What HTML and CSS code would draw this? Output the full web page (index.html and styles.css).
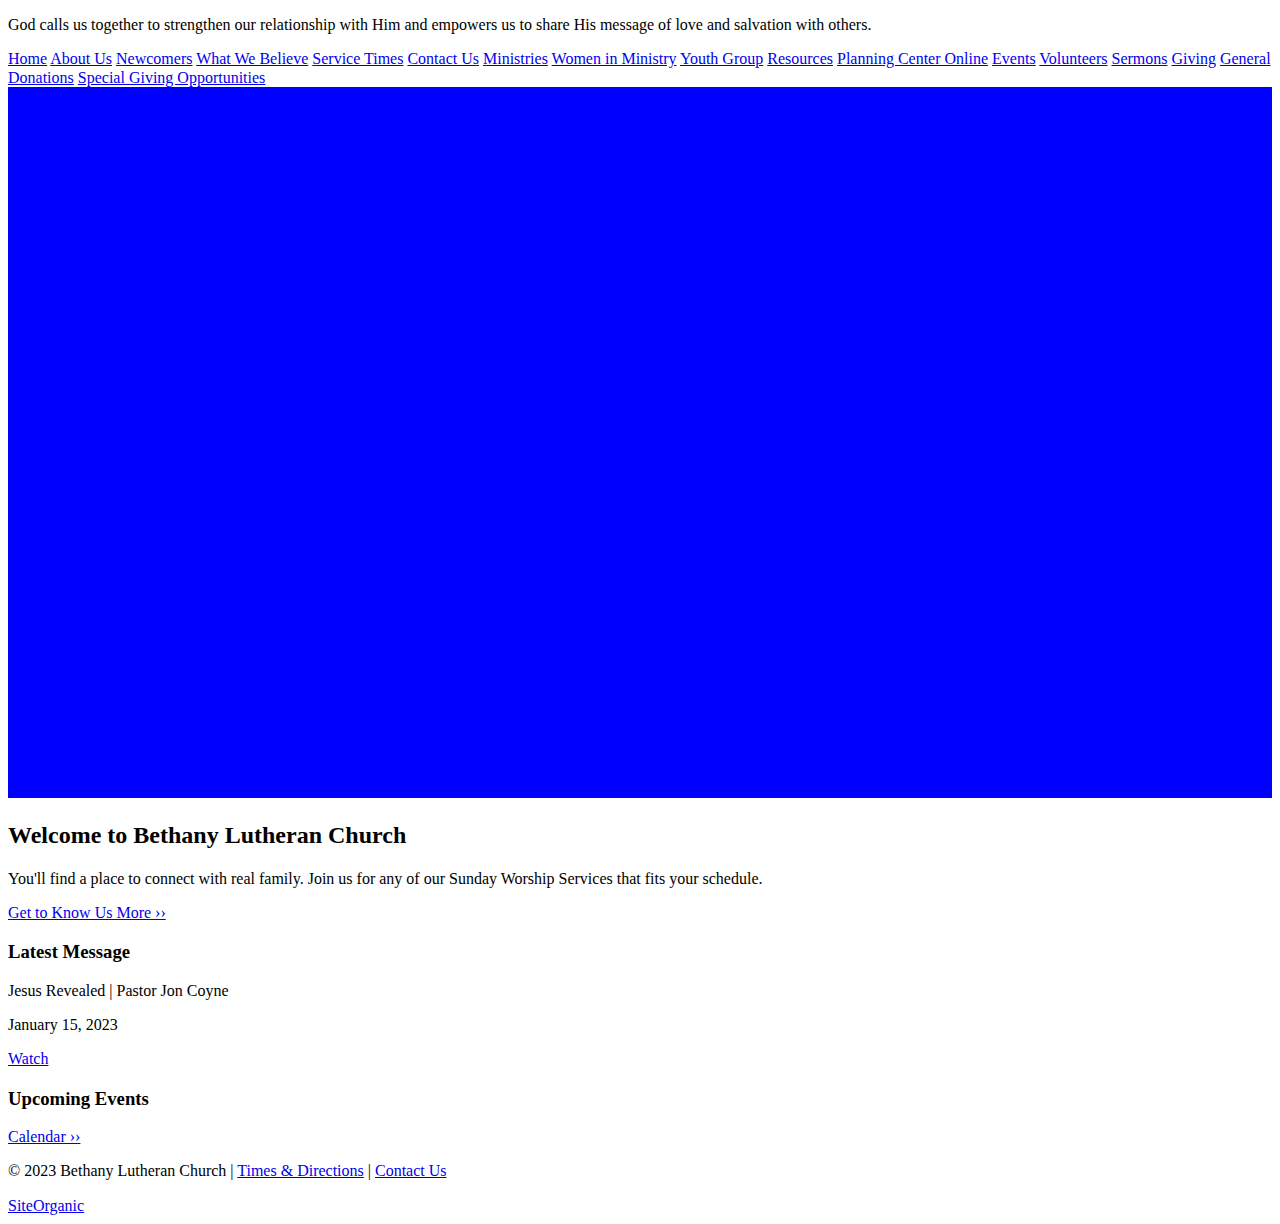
FILE: index.html
```html
<!DOCTYPE html>
<html lang="en">
<head>
<meta charset="utf-8">
<title>Bethany Lutheran Church</title>
<link rel="stylesheet" href="styles.css">
</head>
<body class="page">
<p class="tagline">God calls us together to strengthen our relationship with Him and empowers us to share His message of love and salvation with others.</p>
<nav class="main-nav">
<a href="#">Home</a> <a href="#">About Us</a> <a href="#">Newcomers</a> <a href="#">What We Believe</a> <a href="#">Service Times</a> <a href="#">Contact Us</a> <a href="#">Ministries</a> <a href="#">Women in Ministry</a> <a href="#">Youth Group</a> <a href="#">Resources</a> <a href="#">Planning Center Online</a> <a href="#">Events</a> <a href="#">Volunteers</a> <a href="#">Sermons</a> <a href="#">Giving</a> <a href="#">General Donations</a> <a href="#">Special Giving Opportunities</a>
</nav>
<div class="hero"><span class="hero-video"></span></div>
<h2>Welcome to Bethany Lutheran Church</h2>
<p>You'll find a place to connect with real family. Join us for any of our Sunday Worship Services that fits your schedule.</p>
<p><a href="#">Get to Know Us More ››</a></p>
<h3>Latest Message</h3>
<p>Jesus Revealed | Pastor Jon Coyne</p>
<p>January 15, 2023</p>
<p><a href="#">Watch</a></p>
<h3>Upcoming Events</h3>
<p><a href="#">Calendar ››</a></p>
<p>© 2023 Bethany Lutheran Church | <a href="#">Times &amp; Directions</a> | <a href="#">Contact Us</a></p>
<p><a href="#">SiteOrganic</a></p>
</body>
</html>
```

FILE: styles.css
```css
html {
  margin: 0;
  padding: 0;
}

.page {
  margin: 0 8px 8px;
  padding: 0;
  font-family: "Liberation Serif", "Times New Roman", serif;
  font-size: 16px;
  line-height: 1.15;
  color: #000;
  background: #fff;
}

.tagline {
  margin: 16px 0;
}

.page a {
  color: #0000ee;
}

.main-nav {
  display: block;
}

.hero {
  display: block;
  margin-bottom: 1px;
}

.hero-video {
  display: inline-block;
  width: 100%;
  aspect-ratio: 16 / 9;
  background: #0000ff;
  vertical-align: baseline;
}
```
